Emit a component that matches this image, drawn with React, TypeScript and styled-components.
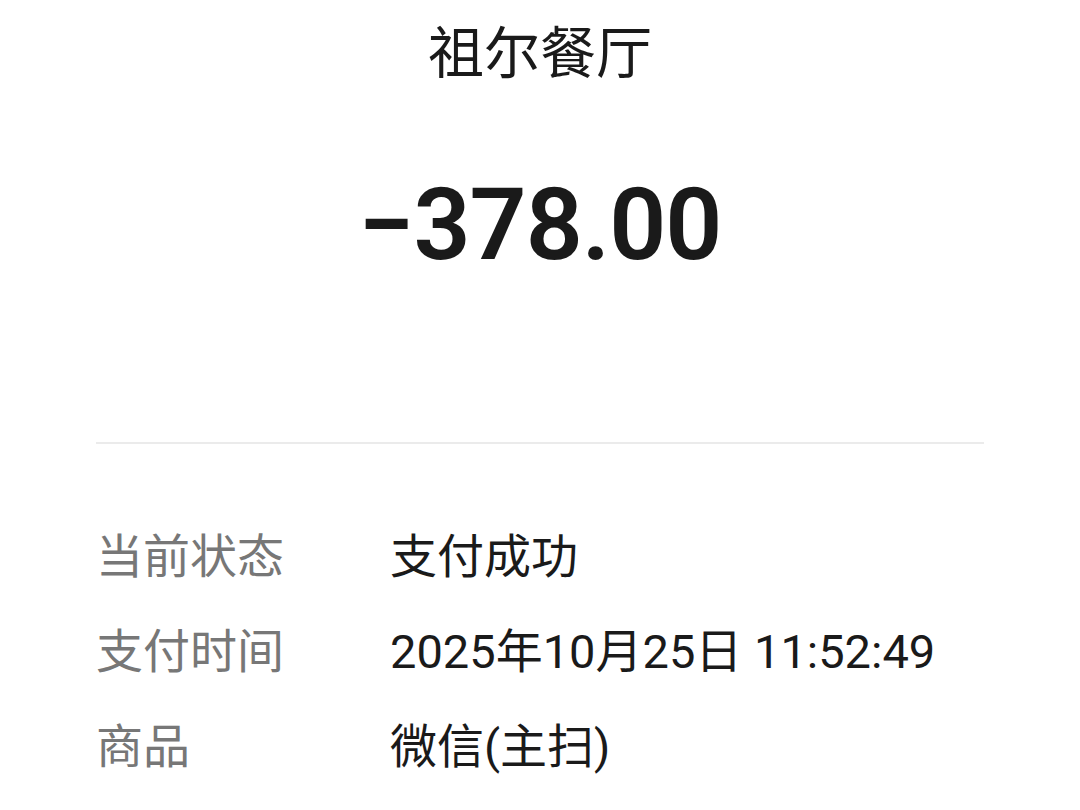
import React from "react";
import styled, { createGlobalStyle } from "styled-components";

const Global = createGlobalStyle`
  html, body { margin: 0; padding: 0; background: #ffffff; }
  body { font-family: Roboto, "Noto Sans CJK SC", sans-serif; }
`;

const Page = styled.div`
  display: flex;
  flex-direction: column;
  padding: 0 96px;
  min-height: 810px;
  box-sizing: border-box;
`;

const Title = styled.h1`
  margin: 14px 0 0;
  font-size: 56px;
  line-height: 80px;
  font-weight: 400;
  color: #1a1a1a;
  text-align: center;
  font-family: Roboto, "Noto Sans CJK SC", sans-serif;
`;

const Amount = styled.div`
  margin-top: 71px;
  font-size: 100px;
  line-height: 120px;
  font-weight: 600;
  letter-spacing: -1px;
  color: #1a1a1a;
  text-align: center;
  font-family: Roboto, "Noto Sans CJK SC", sans-serif;
`;

const Divider = styled.hr`
  margin: 157px 0 0;
  border: none;
  height: 2px;
  background: #ebebeb;
`;

const List = styled.div`
  display: flex;
  flex-direction: column;
  margin-top: 65px;
`;

const Row = styled.div`
  display: flex;
  height: 95px;
  line-height: 95px;
  font-size: 47px;
`;

const Label = styled.div`
  width: 294px;
  flex-shrink: 0;
  color: #777777;
`;

const Value = styled.div`
  color: #1a1a1a;
  white-space: nowrap;
`;

const rows = [
  { label: "当前状态", value: "支付成功" },
  { label: "支付时间", value: "2025年10月25日 11:52:49" },
  { label: "商品", value: "微信(主扫)" },
];

export default function App() {
  return (
    <>
      <Global />
      <Page>
        <Title>祖尔餐厅</Title>
        <Amount>−378.00</Amount>
        <Divider />
        <List>
          {rows.map((r) => (
            <Row key={r.label}>
              <Label>{r.label}</Label>
              <Value>{r.value}</Value>
            </Row>
          ))}
        </List>
      </Page>
    </>
  );
}
